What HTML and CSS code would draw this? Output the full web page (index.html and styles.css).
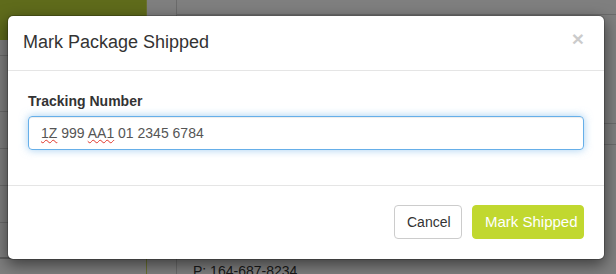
FILE: index.html
```html
<!DOCTYPE html>
<html>
<head>
<meta charset="utf-8">
<link rel="stylesheet" href="styles.css">
</head>
<body>
<div class="page">
  <aside class="sidebar">
    <div class="brand"></div>
    <div class="nav-row r1"></div>
    <div class="nav-row r2"></div>
    <div class="nav-row r3"></div>
    <div class="nav-row r3"></div>
    <div class="nav-row r3"></div>
    <div class="nav-row r4"></div>
  </aside>
  <div class="rail"></div>
  <main class="main">
    <div class="topbar"></div>
    <div class="block b1"></div>
    <div class="block b2"></div>
    <div class="contact">P: 164-687-8234</div>
  </main>
</div>
<div class="backdrop"></div>
<div class="modal">
  <div class="modal-header">
    <h4 class="modal-title">Mark Package Shipped</h4>
    <button class="close" type="button">×</button>
  </div>
  <div class="modal-body">
    <div class="form-group">
      <label class="label">Tracking Number</label>
      <div class="form-control"><span class="misspelled">1Z</span> 999 <span class="misspelled">AA1</span> 01 2345 6784</div>
    </div>
  </div>
  <div class="modal-footer">
    <button class="btn btn-default" type="button">Cancel</button>
    <button class="btn btn-primary" type="button">Mark Shipped</button>
  </div>
</div>
</body>
</html>
```
FILE: styles.css
```css
* { box-sizing: border-box; }
html, body { margin: 0; padding: 0; }
body {
  width: 616px;
  height: 274px;
  overflow: hidden;
  font-family: "Liberation Sans", Arial, Helvetica, sans-serif;
  font-size: 14px;
  color: #333;
  background: #fff;
  position: relative;
}
.page {
  display: flex;
  height: 274px;
  overflow: hidden;
}
.sidebar {
  width: 147px;
  flex: none;
  border-right: 1px solid #d4e35f;
  display: flex;
  flex-direction: column;
}
.sidebar > div { flex: none; }
.brand { height: 40px; background: #bfd737; }
.nav-row { border-bottom: 1px solid #d6d6d6; margin-right: 16px; }
.r1 { height: 16px; }
.r2 { height: 56px; }
.r3 { height: 37px; }
.r4 { height: 36px; border-bottom: 2px solid #bdbdbd; }
.rail {
  width: 30px;
  flex: none;
  border-right: 1px solid #d6d6d6;
  background: #fff;
}
.main {
  flex: 1;
  display: flex;
  flex-direction: column;
  overflow: hidden;
}
.main > div { flex: none; }
.topbar { height: 15px; border-bottom: 1px solid #d6d6d6; }
.block { border-bottom: 1px solid #d6d6d6; }
.b1 { height: 109px; }
.b2 { height: 21px; }
.contact {
  margin-top: 116px;
  padding-left: 16px;
  font-size: 14px;
  line-height: 20px;
  color: #333;
  white-space: nowrap;
}
.backdrop {
  position: absolute;
  inset: 0;
  background: rgba(0, 0, 0, 0.5);
}
.modal {
  position: absolute;
  left: 7px;
  top: 15px;
  width: 598px;
  background: #fff;
  border: 1px solid rgba(0, 0, 0, 0.2);
  border-radius: 6px;
  box-shadow: 0 5px 15px rgba(0, 0, 0, 0.5);
  background-clip: padding-box;
}
.modal-header {
  padding: 14px 15px 15px;
  border-bottom: 1px solid #e5e5e5;
  display: flex;
  align-items: center;
  justify-content: space-between;
}
.modal-title {
  margin: 0;
  font-size: 18px;
  font-weight: 500;
  line-height: 25px;
  color: #333;
}
.close {
  border: 0;
  background: none;
  padding: 0;
  margin: -8px 5px 0 0;
  font-family: inherit;
  font-size: 21px;
  font-weight: bold;
  line-height: 1;
  color: #000;
  opacity: 0.2;
}
.modal-body { padding: 20px; }
.form-group { margin-bottom: 15px; }
.label {
  display: block;
  font-weight: bold;
  line-height: 20px;
  margin-bottom: 5px;
  color: #333;
}
.form-control {
  height: 34px;
  padding: 6px 12px;
  line-height: 20px;
  font-size: 14px;
  color: #555;
  border: 1px solid #66afe9;
  border-radius: 4px;
  box-shadow: inset 0 1px 1px rgba(0, 0, 0, 0.075), 0 0 8px rgba(102, 175, 233, 0.6);
  white-space: nowrap;
}
.misspelled {
  text-decoration: underline wavy #e0362a;
  text-decoration-thickness: 1px;
  text-underline-offset: 1px;
}
.modal-footer {
  padding: 19px 20px 20px;
  border-top: 1px solid #e5e5e5;
  display: flex;
  justify-content: flex-end;
  gap: 10px;
}
.btn {
  height: 34px;
  padding: 6px 12px;
  font-family: inherit;
  font-size: 14px;
  line-height: 20px;
  border: 1px solid transparent;
  border-radius: 4px;
  white-space: nowrap;
  text-align: center;
}
.btn-default {
  background: #fff;
  color: #333;
  border-color: #ccc;
  width: 68px;
}
.btn-primary {
  background: #c1d82f;
  border-color: #c1d82f;
  color: #fff;
  width: 112px;
  font-size: 15px;
}
```
